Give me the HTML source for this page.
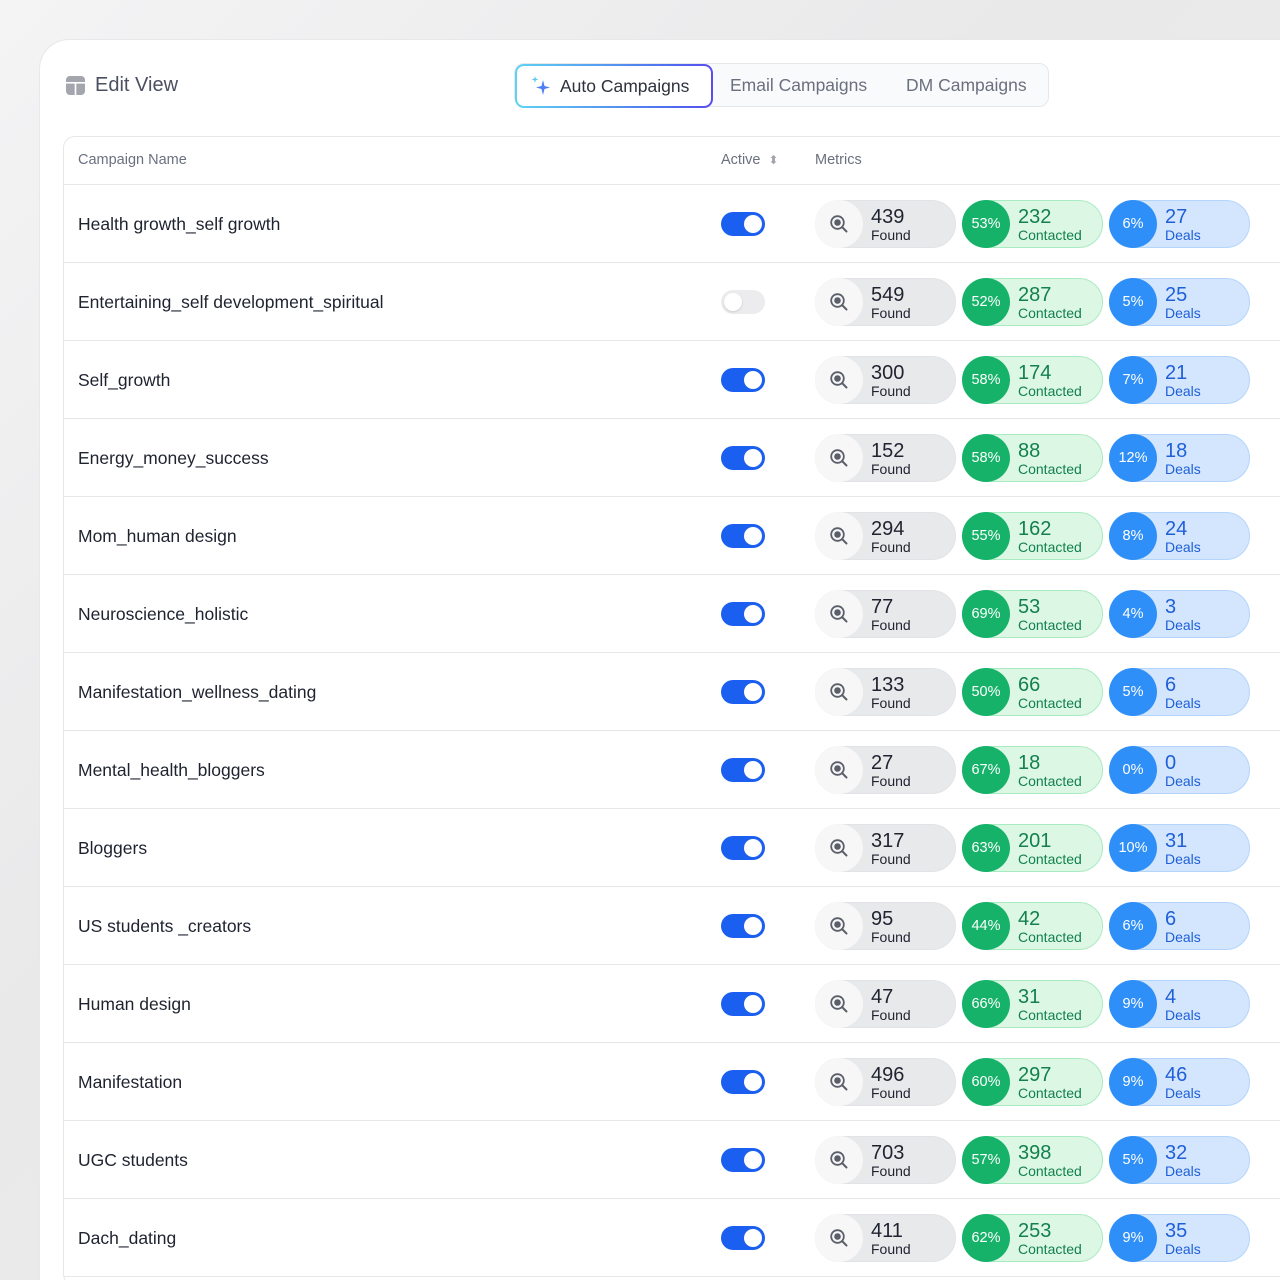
<!DOCTYPE html>
<html><head><meta charset="utf-8"><style>
*{box-sizing:border-box;margin:0;padding:0}
html,body{width:1280px;height:1280px;overflow:hidden}
body{background:linear-gradient(135deg,#f4f4f5 0%,#e9e9ea 40%,#ececed 100%);font-family:"Liberation Sans",sans-serif;position:relative}
.card{position:absolute;left:39px;top:39px;width:1241px;height:1241px;background:#fff;border-top-left-radius:30px;border:1px solid #e8e8ea;border-right:none;border-bottom:none;overflow:hidden}
.title{position:absolute;left:26px;top:34px;font-size:20px;color:#4b5060;display:flex;align-items:center;gap:10px}
.tabs{position:absolute;left:474px;top:23px;width:535px;height:44px;background:#f9fafb;border:1px solid #e6e7ea;border-radius:10px}
.tab{position:absolute;top:0;height:44px;line-height:42px;font-size:17.5px;color:#6b7080}
.act{position:absolute;left:0;top:0;width:198px;height:44px;border-radius:9px;padding:2px;background:linear-gradient(90deg,#5ed3f3,#4f6bf0 80%,#5b4bef)}
.act div{background:#fff;border-radius:7px;height:40px;display:flex;align-items:center;gap:7px;padding-left:12px;font-size:17.5px;color:#2e323d}
.table{position:absolute;left:23px;top:96px;width:1250px;height:1150px;border:1px solid #e5e7eb;border-radius:12px}
.hdr{position:absolute;top:0;left:0;right:0;height:48px;border-bottom:1px solid #e5e7eb;font-size:14.5px;color:#6b7080}
.hdr span{position:absolute;top:15px}
.row{position:absolute;left:0;right:0;height:78px;border-bottom:1px solid #e5e7eb}
.name{position:absolute;left:14px;top:29px;font-size:17.5px;color:#1f2330}
.tg{position:absolute;left:657px;top:27px;width:44px;height:24px;border-radius:12px;background:#1a5fef}
.tg::after{content:"";position:absolute;right:3px;top:3px;width:18px;height:18px;border-radius:50%;background:#fff}
.tg.off{background:#ececee}
.tg.off::after{left:3px;right:auto;box-shadow:0 1px 2px rgba(0,0,0,.15)}
.p{position:absolute;top:15px;width:141px;height:48px;border-radius:24px}
.p .c{position:absolute;left:0;top:0;width:48px;height:48px;border-radius:50%;display:flex;align-items:center;justify-content:center;color:#fff;font-size:14.5px}
.p .n{position:absolute;left:55px;top:5px;font-size:20px;line-height:22px}
.p .l{position:absolute;left:55px;top:26px;font-size:14px;line-height:16px}
.f{left:751px;background:#e8e9eb;border:1px solid #e2e3e6}
.f .c{background:#f7f7f8;left:-1px;top:-1px}
.f .n,.f .l{color:#1f2330}
.g{left:898px;background:#dcf8e5;border:1px solid #a9ebc1}
.g .c{background:#17b26a;left:-1px;top:-1px}
.g .n,.g .l{color:#13804d}
.b{left:1045px;background:#d3e6fd;border:1px solid #b4d5fb}
.b .c{background:#2f8ff8;left:-1px;top:-1px}
.b .n,.b .l{color:#1f5fd8}
</style></head><body>
<div class="card">
<div class="title"><svg width="19" height="19" viewBox="0 0 19 19"><rect x="0" y="0" width="19" height="19" rx="4" fill="#a3a6ad"/><rect x="0" y="6" width="19" height="1.6" fill="#fff"/><rect x="8.7" y="6" width="1.6" height="13" fill="#fff"/></svg><span>Edit View</span></div>
<div class="tabs">
<div class="act"><div><svg width="24" height="24" viewBox="0 0 24 24"><path d="M14 6 L15.5 12 L21 13.5 L15.5 15 L14 21 L12.5 15 L7 13.5 L12.5 12 Z" fill="#4f7df3"/><path d="M6 2 L6.8 4.6 L9.5 5.5 L6.8 6.3 L6 9 L5.2 6.3 L2.5 5.5 L5.2 4.6 Z" fill="#58c8f0"/></svg>Auto Campaigns</div></div>
<div class="tab" style="left:215px">Email Campaigns</div>
<div class="tab" style="left:391px">DM Campaigns</div>
</div>
<div class="table">
<div class="hdr"><span style="left:14px">Campaign Name</span><span style="left:657px">Active <span style="position:static;color:#a0a3ab;font-size:12px;margin-left:4px">⬍</span></span><span style="left:751px">Metrics</span></div>
<div id="rows"></div>
</div>
</div>
<script>
const d=[["Health growth_self growth",1,439,53,232,6,27],["Entertaining_self development_spiritual",0,549,52,287,5,25],["Self_growth",1,300,58,174,7,21],["Energy_money_success",1,152,58,88,12,18],["Mom_human design",1,294,55,162,8,24],["Neuroscience_holistic",1,77,69,53,4,3],["Manifestation_wellness_dating",1,133,50,66,5,6],["Mental_health_bloggers",1,27,67,18,0,0],["Bloggers",1,317,63,201,10,31],["US students _creators",1,95,44,42,6,6],["Human design",1,47,66,31,9,4],["Manifestation",1,496,60,297,9,46],["UGC students",1,703,57,398,5,32],["Dach_dating",1,411,62,253,9,35]];
const mag='<svg width="20" height="20" viewBox="0 0 20 20"><circle cx="8.5" cy="8.5" r="6.3" fill="none" stroke="#5b5f6a" stroke-width="1.8"/><circle cx="8.5" cy="8.5" r="3.3" fill="#5b5f6a"/><path d="M13 13 L17.5 17.5" stroke="#5b5f6a" stroke-width="2" stroke-linecap="round"/></svg>';
let h='';d.forEach((r,i)=>{h+=`<div class="row" style="top:${48+i*78}px"><div class="name">${r[0]}</div><div class="tg${r[1]?'':' off'}"></div>
<div class="p f"><div class="c">${mag}</div><div class="n">${r[2]}</div><div class="l">Found</div></div>
<div class="p g"><div class="c">${r[3]}%</div><div class="n">${r[4]}</div><div class="l">Contacted</div></div>
<div class="p b"><div class="c">${r[5]}%</div><div class="n">${r[6]}</div><div class="l">Deals</div></div></div>`});
document.getElementById('rows').innerHTML=h;
</script>
</body></html>
